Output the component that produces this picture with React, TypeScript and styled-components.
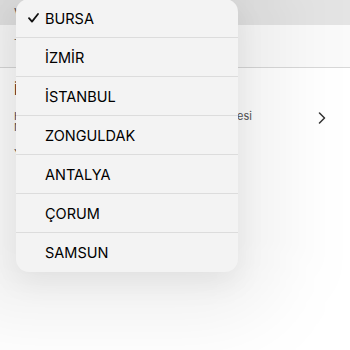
import React from "react";
import styled, { createGlobalStyle } from "styled-components";

const Global = createGlobalStyle`
  html, body { margin: 0; padding: 0; background: #ffffff; }
  body { font-family: Inter, "Noto Sans", sans-serif; -webkit-font-smoothing: antialiased; }
  #root { width: 350px; height: 350px; overflow: hidden; }
`;

const Screen = styled.div`
  position: relative;
  width: 350px;
  height: 350px;
  overflow: hidden;
  background: #ffffff;
  display: flex;
  flex-direction: column;
`;

const TopBar = styled.div`
  height: 25px;
  box-sizing: border-box;
  background: #e4e4e4;
  display: flex;
  align-items: flex-end;
  padding: 0 14px 4px;
  font-size: 13px;
  color: #555;
`;

const SectionHeader = styled.div`
  height: 43px;
  display: flex;
  align-items: flex-start;
  padding: 11px 14px 0;
  font-size: 12px;
  color: #777;
  border-bottom: 1px solid #d8d8d8;
  box-sizing: border-box;
  background: #fafafa;
`;

const Row = styled.div`
  display: flex;
  align-items: center;
  padding: 13px 24px 10px 14px;
  gap: 8px;
`;

const RowText = styled.div`
  flex: 1;
  min-width: 0;
  display: flex;
  flex-direction: column;
`;

const RowTitle = styled.div`
  font-size: 14px;
  line-height: 18px;
  color: #1a1a1a;
  margin-bottom: 12px;
`;

const RowSub = styled.div`
  font-size: 11px;
  color: #555;
  line-height: 10.5px;
  white-space: nowrap;
`;

const RowFoot = styled.div`
  font-size: 11px;
  color: #555;
  margin-top: 14px;
`;

const Chevron = styled.svg`
  width: 8px;
  height: 12px;
  flex: none;
  margin-top: -6px;
`;

const Haze = styled.div`
  position: absolute;
  left: -60px;
  top: -60px;
  width: 340px;
  height: 380px;
  border-radius: 60px;
  background: rgba(0, 0, 0, 0.06);
  filter: blur(36px);
  pointer-events: none;
`;

const Menu = styled.div`
  position: absolute;
  left: 16px;
  top: -1px;
  width: 222px;
  background: #f3f3f3;
  border-radius: 13px;
  overflow: hidden;
  box-shadow: 0 10px 30px rgba(0, 0, 0, 0.07);
  display: flex;
  flex-direction: column;
`;

const Item = styled.div<{ $last?: boolean }>`
  height: 39px;
  box-sizing: border-box;
  display: flex;
  align-items: center;
  border-bottom: ${(p) => (p.$last ? "none" : "1px solid #dcdcdc")};
  font-size: 14.5px;
  font-weight: 400;
  color: #000000;
`;

const CheckSlot = styled.div`
  width: 29px;
  display: flex;
  justify-content: flex-end;
  padding-right: 6px;
  box-sizing: border-box;
  flex: none;
  padding-left: 10px;
`;

const Check = styled.svg`
  width: 11px;
  height: 10px;
`;

const cities = ["BURSA", "İZMİR", "İSTANBUL", "ZONGULDAK", "ANTALYA", "ÇORUM", "SAMSUN"];

export default function App() {
  return (
    <>
      <Global />
      <Screen>
        <TopBar>Vazgeç</TopBar>
        <SectionHeader>Teslimat Bilgileri</SectionHeader>
        <Row>
          <RowText>
            <RowTitle>İl Seçimi</RowTitle>
            <RowSub>Hizmet almak istediğiniz il ve ilçenin seçilmesi</RowSub>
            <RowSub>Mutlaka yapılmalıdır</RowSub>
            <RowFoot>Yapılacak işlem seçiniz</RowFoot>
          </RowText>
          <Chevron viewBox="0 0 8 12">
            <path d="M1.5 1 L6.5 6 L1.5 11" fill="none" stroke="#333" strokeWidth="1.5" strokeLinecap="round" strokeLinejoin="round" />
          </Chevron>
        </Row>
        <Haze />
        <Menu>
          {cities.map((c, i) => (
            <Item key={c} $last={i === cities.length - 1}>
              <CheckSlot>
                {i === 0 && (
                  <Check viewBox="0 0 11 10">
                    <path d="M1 5.2 L4 8.6 L10 1" fill="none" stroke="#111" strokeWidth="1.8" strokeLinecap="round" strokeLinejoin="round" />
                  </Check>
                )}
              </CheckSlot>
              {c}
            </Item>
          ))}
        </Menu>
      </Screen>
    </>
  );
}
